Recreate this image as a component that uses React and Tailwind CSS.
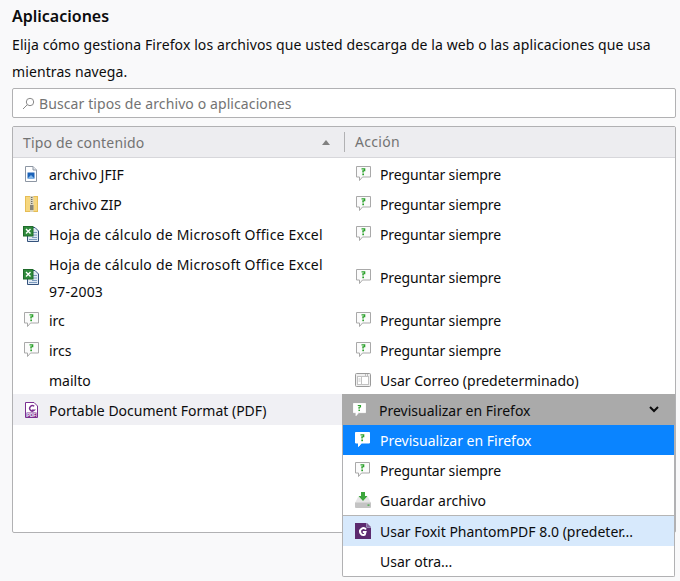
import React from 'react';

const Bubble = ({ white, small }) => (
  <svg width={small ? 13 : 15} height={small ? 14 : 16} viewBox="0 0 15 16" className="shrink-0">
    <path d="M.5 .5h14v10.500H6.500l-3 3.500v-3.500h-3z" fill={white ? '#fff' : '#fbfbfb'} stroke={white ? '#fff' : '#a9a9a9'} />
    <path d="M5.500 2.200h3.800v3H7.800v1.300H6.300V4.200h1.500v-.7H5.500z" fill="#2ba12b" />
    <rect x="6.300" y="7.500" width="1.700" height="1.700" fill="#2ba12b" />
  </svg>
);

const ImageFile = () => (
  <svg width="12" height="16" viewBox="0 0 12 16" className="shrink-0">
    <path d="M.5 .5h7.500l3.500 3.500v11.500H.5z" fill="#fff" stroke="#8d96a3" />
    <path d="M8 .5V4h3.500" fill="#e6e8ec" stroke="#8d96a3" />
    <rect x="2.500" y="6.500" width="7" height="6" fill="#1c63b8" />
    <path d="M2.500 12.500l3.500-3.500 3.500 3.500z" fill="#7fb6ea" />
  </svg>
);

const ZipFile = () => (
  <svg width="13" height="16" viewBox="0 0 13 16" className="shrink-0">
    <rect x=".5" y=".5" width="12" height="15" fill="#f6d77f" stroke="#e6bd55" />
    <rect x="5" y="0" width="3.500" height="16" fill="#d9d5c3" />
    <path d="M6.700 1v8" stroke="#6f6e64" strokeWidth="1.500" strokeDasharray="1 1" />
    <rect x="5" y="9" width="3.500" height="5" fill="#85847a" />
  </svg>
);

const ExcelFile = () => (
  <svg width="16" height="16" viewBox="0 0 16 16" className="shrink-0">
    <path d="M4.500 1.500h7.500l3.500 3.500v10.500h-11z" fill="#dfe8f3" stroke="#34527c" />
    <path d="M9 6.500h5M9 9h5M9 11.500h5M6 13.500h8" stroke="#7d9cc0" />
    <rect x=".5" y=".5" width="9.500" height="9.500" fill="#2f8a3c" stroke="#1f6a2b" />
    <path d="M3 3l4.500 4.500M7.500 3L3 7.500" stroke="#fff" strokeWidth="1.400" />
  </svg>
);

const PdfFile = () => (
  <svg width="13" height="16" viewBox="0 0 13 16" className="shrink-0">
    <path d="M.5 .5h8.500l3.500 3.500v11.500H.5z" fill="#fff" stroke="#7b2f91" />
    <path d="M9.200 4.300a2.700 2.700 0 1 0 0 4H6.800" fill="none" stroke="#7b2f91" strokeWidth="1.400" />
    <rect x="1.500" y="10.500" width="10" height="4.500" fill="#7b2f91" />
    <text x="6.500" y="14.500" textAnchor="middle" fontSize="4.500" fontWeight="700" fill="#fff" fontFamily="Liberation Sans, sans-serif">PDF</text>
  </svg>
);

const AppWindow = () => (
  <svg width="16" height="16" viewBox="0 0 16 16" className="shrink-0">
    <rect x=".5" y="1.500" width="15" height="13" rx="1" fill="#efefef" stroke="#9a9a9a" />
    <rect x="2.500" y="4.500" width="11" height="8" fill="#fff" stroke="#c2c2c2" />
    <path d="M6.500 4.500v8M3.500 7h2M3.500 9h2" stroke="#c2c2c2" />
    <path d="M10 3h1M12 3h1" stroke="#8a8a8a" />
  </svg>
);

const SaveFile = () => (
  <svg width="16" height="16" viewBox="0 0 16 16" className="shrink-0">
    <path d="M3 5h10l3 6H0z" fill="#e6e6e6" />
    <path d="M0 10.500h16V15a1 1 0 0 1-1 1H1a1 1 0 0 1-1-1z" fill="#c4c4c4" />
    <rect x="12.500" y="12.500" width="2" height="1.200" fill="#3ca63c" />
    <path d="M6 0h4v4h2.500L8 9 3.500 4H6z" fill="#3ca63c" />
  </svg>
);

const FoxitIcon = () => (
  <svg width="16" height="16" viewBox="0 0 16 16" className="shrink-0">
    <path d="M0 0h11.500v4.500H16V16H0z" fill="#5c2a6e" />
    <path d="M12 0l4 4h-4z" fill="#5c2a6e" opacity=".7" />
    <path d="M11 6.500A3.300 3.300 0 1 0 9.800 11.500L10.500 9H7.800" fill="none" stroke="#fff" strokeWidth="2" />
  </svg>
);

const rows = [
  { icon: <ImageFile />, name: 'archivo JFIF', action: 'Preguntar siempre', actionIcon: <Bubble /> },
  { icon: <ZipFile />, name: 'archivo ZIP', action: 'Preguntar siempre', actionIcon: <Bubble /> },
  { icon: <ExcelFile />, name: 'Hoja de cálculo de Microsoft Office Excel', wide: true, action: 'Preguntar siempre', actionIcon: <Bubble /> },
  { icon: <ExcelFile />, name: 'Hoja de cálculo de Microsoft Office Excel 97-2003', wide: true, action: 'Preguntar siempre', actionIcon: <Bubble />, tall: true },
  { icon: <Bubble />, name: 'irc', action: 'Preguntar siempre', actionIcon: <Bubble /> },
  { icon: <Bubble />, name: 'ircs', action: 'Preguntar siempre', actionIcon: <Bubble /> },
  { icon: null, name: 'mailto', action: 'Usar Correo (predeterminado)', actionIcon: <AppWindow /> },
];

const menu = [
  { label: 'Previsualizar en Firefox', icon: <Bubble white />, cls: 'h-[30px] bg-[#0a84ff] text-white' },
  { label: 'Preguntar siempre', icon: <Bubble />, cls: 'h-[30px]' },
  { label: 'Guardar archivo', icon: <SaveFile />, cls: 'h-[30px]' },
  { label: 'Usar Foxit PhantomPDF 8.0 (predeter...', icon: <FoxitIcon />, cls: 'h-[31px] border-t border-[#b5b5b5] bg-[#d7e9fc]' },
  { label: 'Usar otra...', icon: null, cls: 'h-[30px]' },
];

export default function App() {
  return (
    <div className="h-[581px] w-[680px] overflow-hidden bg-[#f9f9fa] px-3 font-['Noto_Sans',sans-serif] text-[14px] text-[#0c0c0d]">
      <h2 className="pt-[4px] text-[16px] leading-[24px] font-semibold">Aplicaciones</h2>
      <p className="mt-[3px] text-[14px] leading-[27px] tracking-[0.1px]">
        Elija cómo gestiona Firefox los archivos que usted descarga de la web o las aplicaciones que usa mientras navega.
      </p>
      <div className="mt-[3px] flex h-[30px] w-[664px] items-center gap-[4px] rounded-[2px] border border-[#b1b1b3] bg-white pl-[9px] tracking-[0.1px] text-[#737373]">
        <svg width="13" height="13" viewBox="0 0 13 13" fill="none" stroke="#8a8a8a">
          <circle cx="8" cy="5" r="3.700" />
          <path d="M5.200 7.800 1 12" />
        </svg>
        <span>Buscar tipos de archivo o aplicaciones</span>
      </div>

      <div className="relative mt-2 h-[407px] w-[664px] rounded-[2px] border border-[#b1b1b3] bg-white">
        <div className="flex h-[31px] items-center border-b border-[#d7d7db] bg-[#ededf0] text-[#737373]">
          <div className="flex w-[331px] items-center justify-between pr-[14px] pl-[10px]">
            <span className="tracking-[0.18px]">Tipo de contenido</span>
            <span className="h-0 w-0 border-x-[4px] border-b-[5px] border-x-transparent border-b-[#808080]" />
          </div>
          <div className="h-5 border-l border-[#b1b1b3] pl-[10px] leading-5 tracking-[0.3px]">Acción</div>
        </div>

        <div className="pt-[1px]">
          {rows.map((r) => (
            <div key={r.name} className={`flex items-center ${r.tall ? 'h-[56px]' : 'h-[30px]'}`}>
              <div className="flex w-[331px] items-center gap-[10px] pl-[10px]">
                <span className="flex w-[16px] shrink-0 justify-center">{r.icon}</span>
                <span className={`w-[285px] leading-[27px] ${r.wide ? 'tracking-[0.22px]' : ''} ${r.tall ? 'pt-px' : ''}`}>{r.name}</span>
              </div>
              <div className="flex items-center gap-[9px] pl-[11px]">
                <span className="flex w-[16px] shrink-0 justify-end">{r.actionIcon}</span>
                <span className={r.action === 'Preguntar siempre' ? 'tracking-[-0.15px]' : ''}>{r.action}</span>
              </div>
            </div>
          ))}
          <div className="-mt-px flex h-[31px] items-center bg-[#f0f0f4]">
            <div className="flex w-[329px] items-center gap-[10px] pt-px pl-[10px]">
              <span className="flex w-[16px] shrink-0 justify-center"><PdfFile /></span>
              <span>Portable Document Format (PDF)</span>
            </div>
            <div className="flex h-full flex-1 items-center gap-[13px] bg-[#aaaaaa] pr-[16px] pl-[11px]">
              <Bubble white small />
              <span className="flex-1 pt-px">Previsualizar en Firefox</span>
              <svg width="10" height="7" viewBox="0 0 10 7" fill="none" stroke="#0c0c0d" strokeWidth="2">
                <path d="M1 1l4 4 4-4" />
              </svg>
            </div>
          </div>
        </div>

        <div className="absolute top-[298px] left-[329px] w-[333px] overflow-hidden rounded-b-[2px] border border-t-0 border-[#b1b1b3] bg-white">
          {menu.map((m) => (
            <div key={m.label} className={`flex items-center gap-[9px] pl-[12px] ${m.cls}`}>
              <span className="flex w-[16px] shrink-0 justify-start">{m.icon}</span>
              <span className={m.label === 'Preguntar siempre' ? 'tracking-[-0.15px]' : ''}>{m.label}</span>
            </div>
          ))}
        </div>
      </div>
    </div>
  );
}
